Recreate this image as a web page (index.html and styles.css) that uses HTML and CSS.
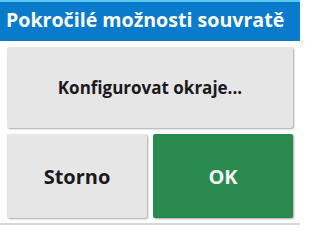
FILE: index.html
```html
<!DOCTYPE html>
<html lang="cs">
<head>
<meta charset="utf-8">
<link rel="stylesheet" href="styles.css">
</head>
<body>
<div class="screen">
  <div class="header">Pokročilé možnosti souvratě</div>
  <div class="content">
    <div class="btn wide">Konfigurovat okraje...</div>
    <div class="row">
      <div class="btn big">Storno</div>
      <div class="btn big ok">OK</div>
    </div>
  </div>
</div>
</body>
</html>
```
FILE: styles.css
```css
html, body {
  margin: 0;
  padding: 0;
  background: #ffffff;
}
.screen {
  width: 300px;
  height: 225px;
  display: flex;
  flex-direction: column;
  font-family: "Open Sans", "Noto Sans", sans-serif;
  font-weight: 700;
  overflow: hidden;
  border-bottom: 2px solid #d8d8d8;
  box-sizing: border-box;
}
.header {
  height: 41px;
  box-sizing: border-box;
  border-top: 2px solid #5cc8f0;
  background: #0a7acb;
  color: #ffffff;
  font-size: 19.6px;
  line-height: 35px;
  padding-left: 6px;
  white-space: nowrap;
}
.content {
  flex: 1;
  display: flex;
  flex-direction: column;
  gap: 6px;
  padding: 6px 7px 5px 7px;
}
.btn {
  background: #e6e6e6;
  border-radius: 2px;
  box-shadow: 1px 1px 2px rgba(0,0,0,0.35);
  display: flex;
  align-items: center;
  justify-content: center;
  color: #1a1a1a;
  font-size: 17px;
}
.wide {
  height: 81px;
}
.row {
  flex: 1;
  display: grid;
  grid-template-columns: 1fr 1fr;
  gap: 6px;
}
.big {
  font-size: 20px;
}
.ok {
  background: #2a8a4e;
  color: #f4f4f4;
}
```
